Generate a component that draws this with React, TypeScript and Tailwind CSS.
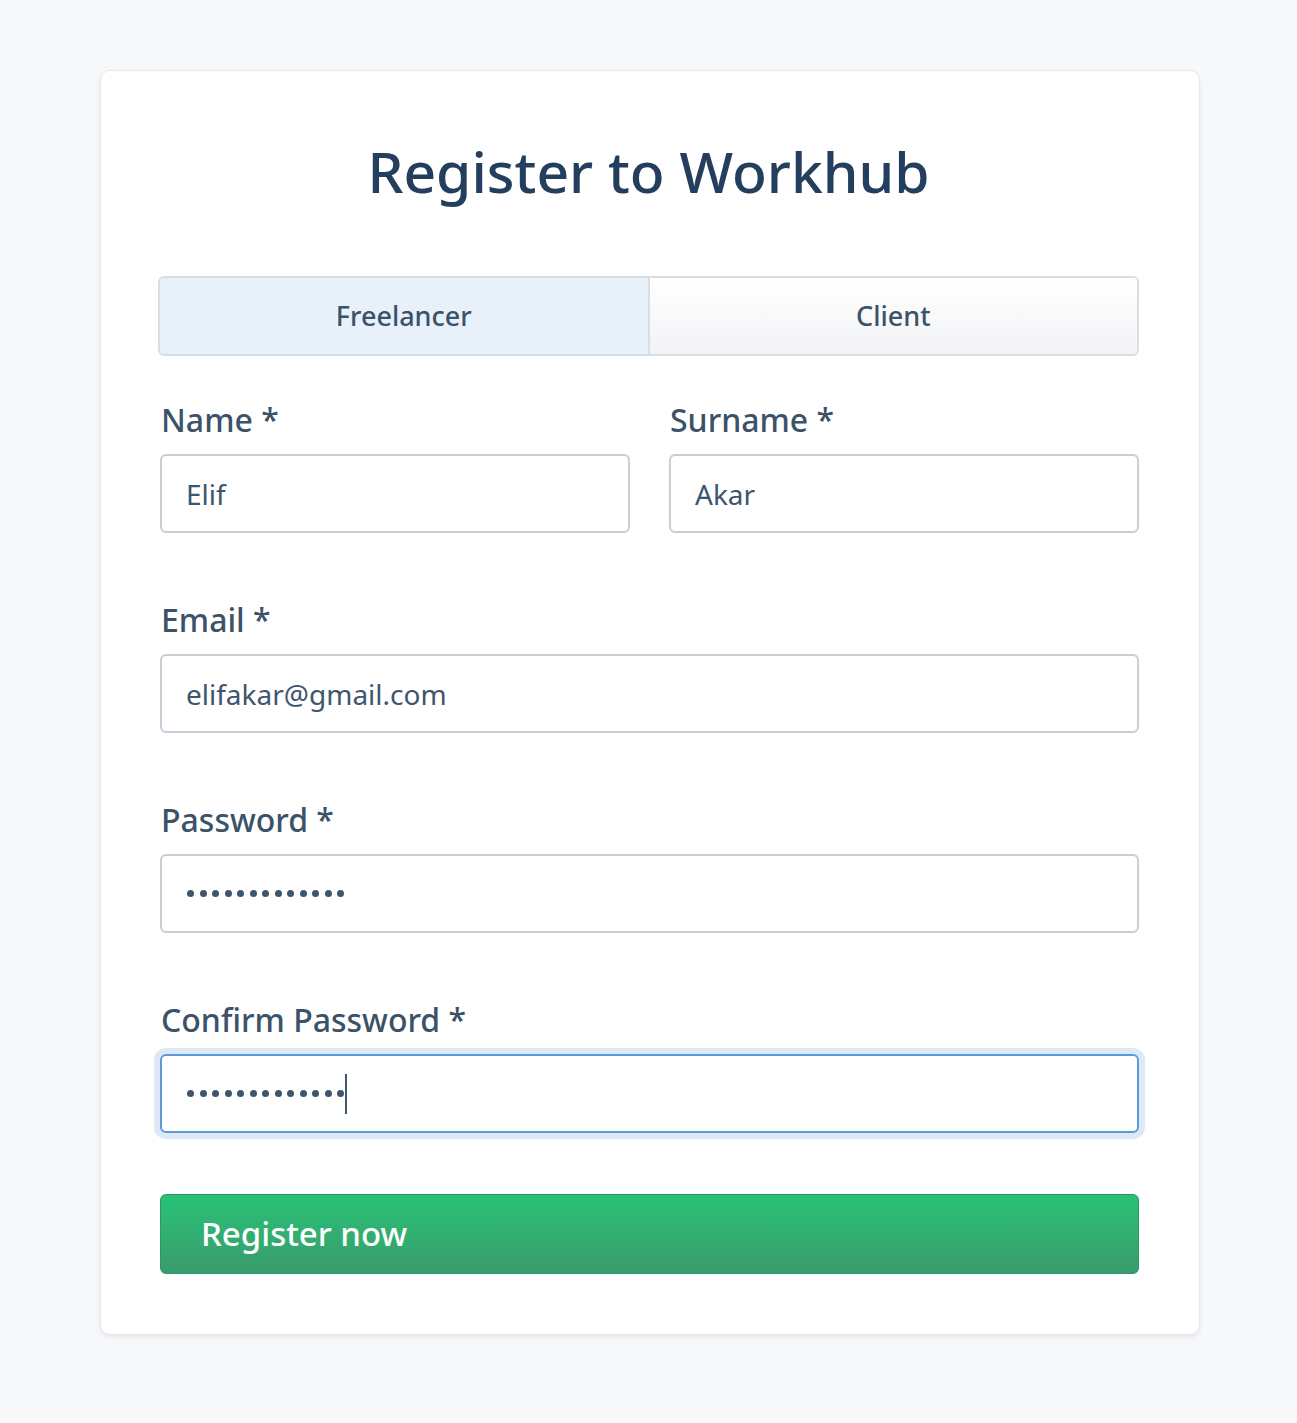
import React from "react";

const font = { fontFamily: '"Noto Sans", "Open Sans", sans-serif' };

function Field({ label, value, className = "" }: { label: string; value: string; className?: string }) {
  return (
    <div className={"flex flex-col " + className}>
      <label className="text-[32px] leading-[40px] font-medium text-[#3b5269] pl-[1px]">{label}</label>
      <div className="mt-[14px] h-[79px] rounded-[6px] border-2 border-[#c6ced7] bg-white flex items-center pl-[24px] text-[28px] text-[#3e566d]">
        {value}
      </div>
    </div>
  );
}

function Dots({ n }: { n: number }) {
  return (
    <div className="flex items-center gap-[5.5px]">
      {Array.from({ length: n }).map((_, i) => (
        <span key={i} className="block w-[7px] h-[7px] rounded-full bg-[#3e566d]" />
      ))}
    </div>
  );
}

export default function App() {
  return (
    <div className="min-h-[1423px] bg-[#f7f8fa] pt-[70px]" style={font}>
      <div className="ml-[100px] w-[1100px] bg-white rounded-[10px] border border-[#e6e8eb] shadow-[0_2px_4px_rgba(30,40,60,0.08)] pl-[57px] pr-[60px] pt-[62px] pb-[60px]">
        <h1 className="text-center text-[57px] leading-[76px] font-medium text-[#243f5e]">Register to Workhub</h1>
        <div className="mt-[67px] flex h-[80px] rounded-[6px] border-2 border-[#d6dee6] overflow-hidden">
          <div className="flex-1 flex items-center justify-center bg-[#e8f0f9] text-[27px] font-medium text-[#3b5269]">Freelancer</div>
          <div className="w-[2px] bg-[#d6dee6]" />
          <div className="flex-1 flex items-center justify-center bg-gradient-to-b from-white to-[#f2f3f5] text-[27px] font-medium text-[#3b5269]">Client</div>
        </div>
        <div className="mt-[44px] pl-[2px] flex gap-[39px]">
          <Field label="Name *" value="Elif" className="flex-1" />
          <Field label="Surname *" value="Akar" className="flex-1" />
        </div>
        <div className="pl-[2px]">
          <Field label="Email *" value="elifakar@gmail.com" className="mt-[67px]" />
          <div className="mt-[67px] flex flex-col">
            <label className="text-[32px] leading-[40px] font-medium text-[#3b5269] pl-[1px]">Password *</label>
            <div className="mt-[14px] h-[79px] rounded-[6px] border-2 border-[#c6ced7] bg-white flex items-center pl-[25px]">
              <Dots n={13} />
            </div>
          </div>
          <div className="mt-[67px] flex flex-col">
            <label className="text-[32px] leading-[40px] font-medium text-[#3b5269] pl-[1px]">Confirm Password *</label>
            <div className="mt-[14px] h-[79px] rounded-[6px] border-2 border-[#5b9bd9] bg-white flex items-center pl-[25px] shadow-[0_0_0_6px_#dde9f6]">
              <Dots n={13} />
              <span className="block w-[2px] h-[40px] bg-[#3e566d] ml-[1px]" />
            </div>
          </div>
          <button className="mt-[61px] w-full h-[80px] rounded-[6px] border border-[#2f9467] bg-gradient-to-b from-[#26c276] to-[#389c6c] text-left pl-[40px] text-[33px] font-medium text-white">
            Register now
          </button>
        </div>
      </div>
    </div>
  );
}
